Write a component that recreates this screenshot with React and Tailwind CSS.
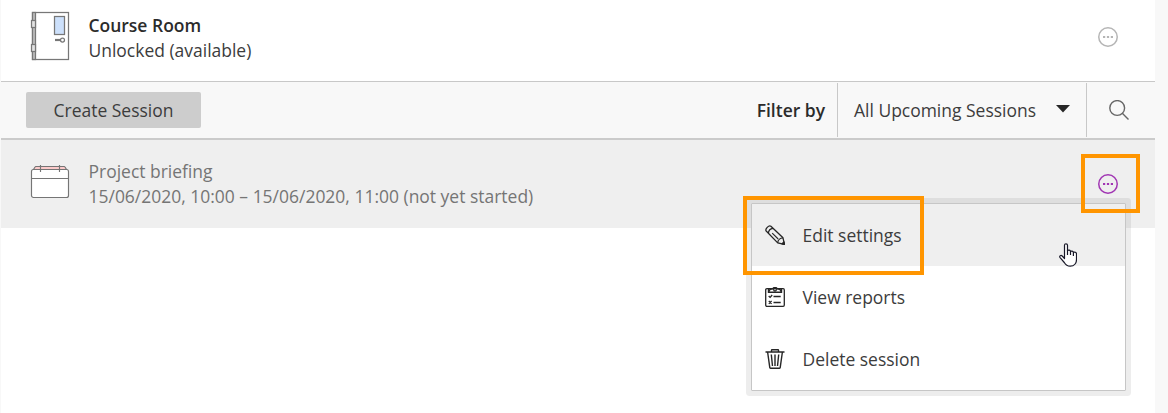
import React from "react";

const DoorIcon = () => (
  <svg width="40" height="50" viewBox="0 0 40 50" fill="none" stroke="#777" strokeWidth="1.250">
    <rect x="2.500" y="1.500" width="36" height="47" fill="#fff" />
    <rect x="2.500" y="1.500" width="3" height="47" fill="#bdbdbd" />
    <rect x="1.500" y="9.500" width="4" height="7" fill="#e2e2e2" />
    <rect x="1.500" y="33.500" width="4" height="7" fill="#e2e2e2" />
    <rect x="24.500" y="5.500" width="10" height="18" fill="#cce0fb" />
    <path d="M25 29h6" strokeWidth="2.200" />
    <circle cx="32.500" cy="29" r="2" fill="#fff" />
  </svg>
);

const CalendarIcon = () => (
  <svg width="40" height="36" viewBox="0 0 40 36" fill="none" stroke="#757575" strokeWidth="1.150">
    <path d="M3.500 5.500 5 3a1 1 0 0 1 1-.5h28a1 1 0 0 1 1 .5l1.500 2.500z" fill="#fccaca" />
    <rect x="1.500" y="5.500" width="37" height="28" rx="2" fill="#fff" />
    <path d="M1.500 14.500h37M10.500 1v7M29.500 1v7" />
  </svg>
);

const MoreIcon = () => (
  <svg width="20" height="20" viewBox="0 0 20 20" fill="none">
    <circle cx="10" cy="10" r="9.250" stroke="currentColor" strokeWidth="1.500" />
    <path d="M5 9h2.200v2H5zM8.900 9h2.200v2H8.900zM12.800 9H15v2h-2.200z" fill="currentColor" />
  </svg>
);

const SearchIcon = () => (
  <svg width="20" height="20" viewBox="0 0 20 20" fill="none" stroke="#666" strokeWidth="1.400">
    <circle cx="8.200" cy="8" r="7.400" />
    <path d="m13.300 13.300 6.200 6.200" />
  </svg>
);

const PencilIcon = () => (
  <svg width="20" height="20" viewBox="0 0 20 20" fill="none" stroke="#262626" strokeWidth="1.300" strokeLinejoin="round">
    <path d="M1.200 6C-.2 4.200 3.800-.3 5.900 1.200L18 12.800l1.400 6.600-6.700-1.500z" />
    <path d="M3.400 8C3.600 5.700 5.600 3.600 8 3.300M12.700 17.900c.1-2.700 2.400-5 5.300-5.100" />
    <path d="m7.200 8.200 6 5.800" strokeWidth="1.100" />
    <path d="m17 18.800 2-1.900.4 2.500z" fill="#262626" />
  </svg>
);

const ReportIcon = () => (
  <svg width="20" height="20" viewBox="0 0 20 20" fill="none" stroke="#262626" strokeWidth="1.300">
    <rect x=".7" y="1.700" width="18.600" height="17.600" rx="1.200" />
    <path d="M3.500 2v3.200h13V2M3.700 4.500C4.500 2.400 6 1.900 7.800 1.900 8.200 0 11.800 0 12.200 1.900c1.800 0 3.300.5 4.100 2.600" strokeWidth="1.400" />
    <circle cx="10" cy="2.700" r="1.300" fill="#fff" />
    <path d="m3.700 9 1.400 1.400L7.200 8M8.500 9.500h7.200M8.500 15.500h7.200M3.800 14l2.800 2.800M6.600 14l-2.800 2.800" />
  </svg>
);

const TrashIcon = () => (
  <svg width="20" height="20" viewBox="0 0 20 20" fill="none" stroke="#262626" strokeWidth="1.400">
    <path d="M.5 3h19M6.500 3V1.200c0-.3.200-.5.500-.5h6c.3 0 .5.200.5.500V3M2.600 3l2.200 15.600c0 .4.300.7.700.7h9c.4 0 .7-.3.700-.7L17.400 3M6.300 5.500l1.200 11.500M10 5.500V17M13.700 5.500 12.500 17" />
  </svg>
);

const HandCursor = () => (
  <svg width="18" height="24" viewBox="0 0 18 24" fill="#fff" stroke="#181828" strokeWidth="1.200" strokeLinejoin="round">
    <path d="M5.500 15.500V2.300C5.500.3 8.500.3 8.500 2.300v5.500c.6-1 2.900-.8 3 .7.700-.8 2.700-.4 2.900.9 1-.6 3.100-.2 3.100 1.600v5.500c0 3.600-2.200 6.700-6.300 6.700-3 0-4.600-1.400-5.900-3.700L.9 14.300c-.8-1.300 1-2.500 2.300-1.300z" />
    <path d="M8.500 7.500V12M11.500 8.500V12M14.400 9.400V13" />
  </svg>
);

const menuItems = [
  { label: "Edit settings", icon: PencilIcon, active: true },
  { label: "View reports", icon: ReportIcon },
  { label: "Delete session", icon: TrashIcon },
];

const SessionMenu = () => (
  <div className="absolute left-[751px] top-[203px] w-[375px] rounded-[1px] border border-[#c6c6c6] shadow-[0_0_0_5px_rgba(0,0,0,0.07)] bg-white">
    {menuItems.map(({ label, icon: Icon, active }) => (
      <button
        key={label}
        className={`flex h-[62px] w-full items-center gap-[17.500px] pl-[13px] text-left ${active ? "bg-[#efefef]" : "bg-white"}`}
      >
        <Icon />
        <span>{label}</span>
      </button>
    ))}
  </div>
);

const App = () => {
  return (
    <div className="relative h-[413px] w-[1168px] overflow-hidden bg-[#f8f8f8] pl-px pr-[13px] font-['Open_Sans',sans-serif] text-[17.480px] leading-[25px] text-[#3c3c3c]">
      <div className="h-full bg-white">
        <div className="flex h-[82px] items-start border-b border-[#c8c8c8] pl-[29px] pt-[11px]">
          <DoorIcon />
          <div className="ml-[18.500px] mt-[2px]">
            <h2 className="font-semibold text-[#2b2b2b]">Course Room</h2>
            <p>Unlocked (available)</p>
          </div>
          <button className="ml-auto mr-[37px] mt-[16px] text-[#b5b5b5]">
            <MoreIcon />
          </button>
        </div>

        <div className="flex h-[58px] items-center border-b-2 border-[#cbcbcb] bg-[#f8f8f8] pl-[25px]">
          <button className="h-9 w-[175px] rounded-[2px] bg-[#cdcdcd]">Create Session</button>
          <span className="ml-auto mr-3 font-semibold text-[#2b2b2b]">Filter by</span>
          <button className="flex h-[54px] w-[250px] items-center justify-between border-x border-[#c8c8c8] px-4">
            All Upcoming Sessions
            <svg className="mb-0.5" width="14" height="8" viewBox="0 0 14 8">
              <path d="M0 0h14L7 7.500z" fill="#262626" />
            </svg>
          </button>
          <button className="flex w-[68px] justify-center pr-1">
            <SearchIcon />
          </button>
        </div>

        <div className="flex h-[88px] items-start bg-[#efefef] pl-[29px] pt-[24px] text-[#757575]">
          <CalendarIcon />
          <div className="ml-[18.500px] -mt-[5px]">
            <h3>Project briefing</h3>
            <p>15/06/2020, 10:00 – 15/06/2020, 11:00 (not yet started)</p>
          </div>
          <button className="ml-auto mr-[37px] mt-[10px] text-[#a136b3]">
            <MoreIcon />
          </button>
        </div>
      </div>

      <SessionMenu />
      <div className="pointer-events-none absolute left-[743px] top-[196px] h-[79px] w-[181px] border-4 border-[#ff9500]" />
      <div className="pointer-events-none absolute left-[1081px] top-[154px] h-[59px] w-[59px] border-4 border-[#ff9500]" />
      <div className="pointer-events-none absolute left-[1059px] top-[243px]">
        <HandCursor />
      </div>
    </div>
  );
};

export default App;
